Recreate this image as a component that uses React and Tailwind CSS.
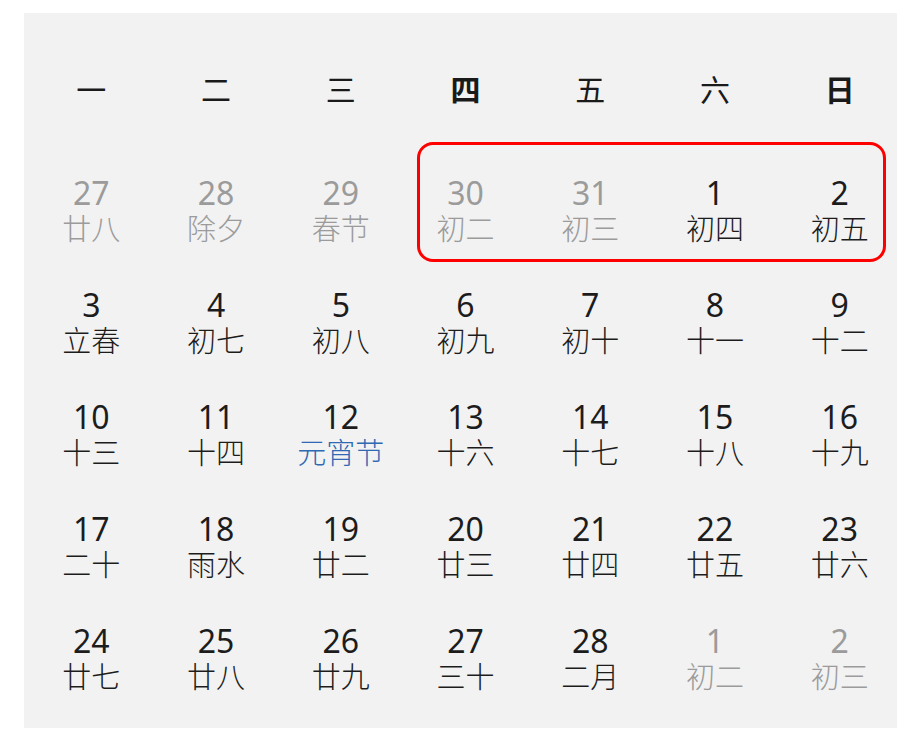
const weekdays = ['一', '二', '三', '四', '五', '六', '日'];

// [day, lunar, tone] tone: 'dim' = other month, 'fest' = festival
const days = [
  ['27', '廿八', 'dim'], ['28', '除夕', 'dim'], ['29', '春节', 'dim'], ['30', '初二', 'dim'], ['31', '初三', 'dim'], ['1', '初四'], ['2', '初五'],
  ['3', '立春'], ['4', '初七'], ['5', '初八'], ['6', '初九'], ['7', '初十'], ['8', '十一'], ['9', '十二'],
  ['10', '十三'], ['11', '十四'], ['12', '元宵节', 'fest'], ['13', '十六'], ['14', '十七'], ['15', '十八'], ['16', '十九'],
  ['17', '二十'], ['18', '雨水'], ['19', '廿二'], ['20', '廿三'], ['21', '廿四'], ['22', '廿五'], ['23', '廿六'],
  ['24', '廿七'], ['25', '廿八'], ['26', '廿九'], ['27', '三十'], ['28', '二月'], ['1', '初二', 'dim'], ['2', '初三', 'dim'],
];

const cjk = "font-['Noto_Sans_CJK_SC',sans-serif]";

function DayCell({ day, lunar, tone }) {
  const numColor = tone === 'dim' ? 'text-[#9b9b9b]' : 'text-[#1c1c1c]';
  const lunarColor =
    tone === 'dim' ? 'text-[#9b9b9b]' : tone === 'fest' ? 'text-[#2f69b3]' : 'text-[#1c1c1c]';
  return (
    <div className="h-[112px] flex flex-col items-center justify-center">
      <span className={`block font-['Noto_Sans',sans-serif] text-[32px] leading-[34px] ${numColor}`}>{day}</span>
      <span className={`block ${cjk} font-light text-[29px] leading-[34px] ${lunarColor}`}>{lunar}</span>
    </div>
  );
}

export default function App() {
  return (
    <div className="w-[921px] h-[739px] bg-white pt-[13px] pl-[24px]">
      <div className="relative w-[873px] h-[715px] bg-[#f2f2f2] overflow-hidden">
        <div className="w-[873px] ml-[5px] grid grid-cols-7">
          {weekdays.map((w, i) => (
            <div key={w} className="h-[141px] pt-[58px] flex justify-center">
              <span
                className={`${cjk} text-[30px] leading-[34px] text-[#1a1a1a] ${
                  i === 3 || i === 6 ? 'font-semibold' : 'font-normal'
                }`}
              >
                {w}
              </span>
            </div>
          ))}
          {days.map(([d, l, t], i) => (
            <DayCell key={i} day={d} lunar={l} tone={t} />
          ))}
        </div>
        <div className="absolute left-[393px] top-[129px] w-[469px] h-[120px] border-[3px] border-[#ff0000] rounded-[16px]" />
      </div>
    </div>
  );
}
